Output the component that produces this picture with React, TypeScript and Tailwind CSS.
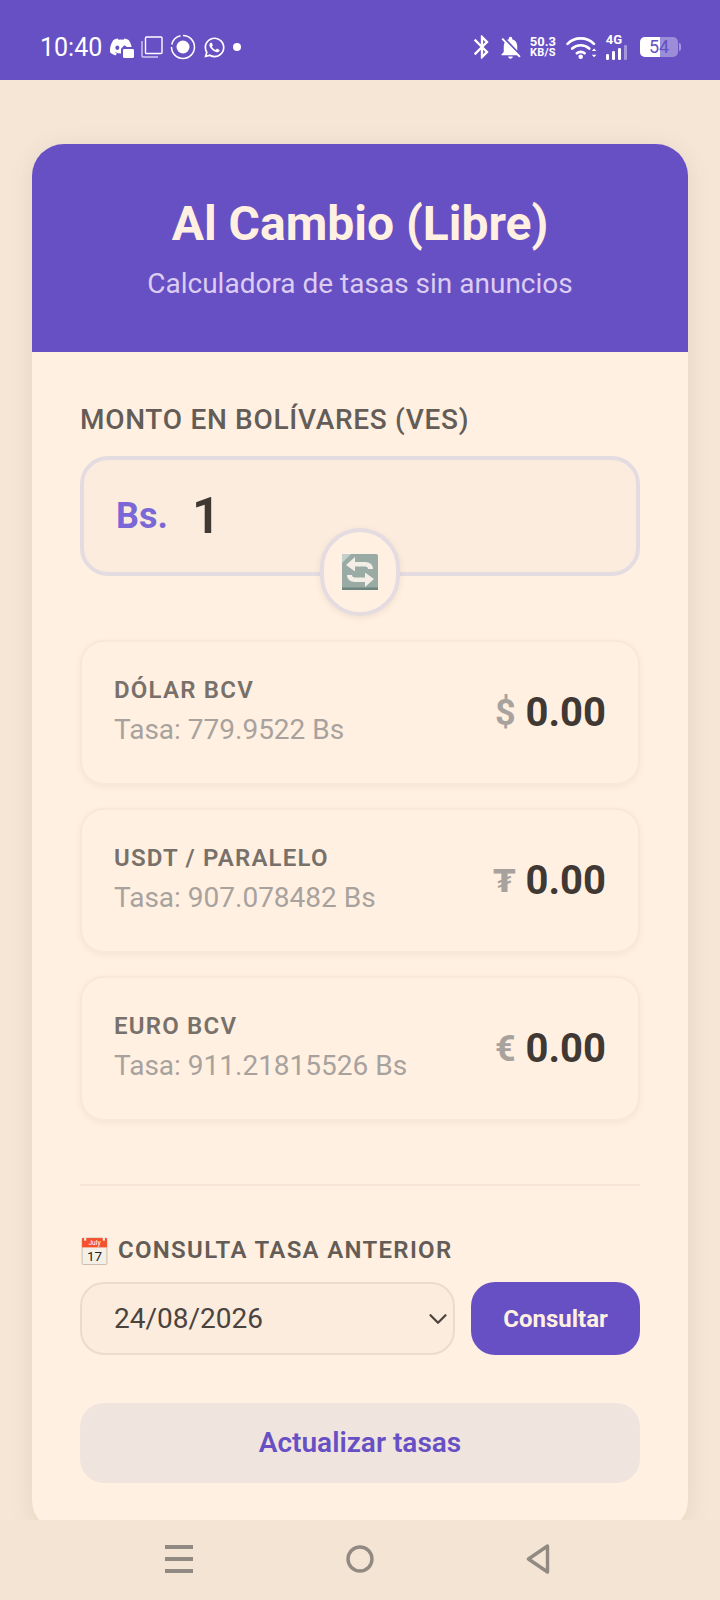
import React from 'react';
import { ChevronDown } from 'lucide-react';
import { FaDiscord, FaWhatsapp } from 'react-icons/fa';
import { MdBluetooth, MdNotificationsOff } from 'react-icons/md';

const rates = [
  { name: 'DÓLAR BCV', rate: 'Tasa: 779.9522 Bs', symbol: '$' },
  { name: 'USDT / PARALELO', rate: 'Tasa: 907.078482 Bs', symbol: '₮' },
  { name: 'EURO BCV', rate: 'Tasa: 911.21815526 Bs', symbol: '€' },
];

// Status bar icons
const WifiIcon = () => (
  <svg width="31" height="25" viewBox="0 0 30 24" fill="none" stroke="white" strokeWidth="2.6" strokeLinecap="round">
    <path d="M1.5 8.5C8.5 1.5 20 1.5 27 8.5" />
    <path d="M6 13C10.5 8.8 18 8.8 22.5 13" />
    <path d="M10.5 17.5C12.5 15.8 16 15.8 18 17.5" />
    <circle cx="14.2" cy="21" r="2.2" fill="white" stroke="none" />
    <path d="M25 15.5l2.2-2.5 2.2 2.500zM25 19l2.2 2.500 2.2-2.500z" fill="white" stroke="none" />
  </svg>
);

const SignalIcon = () => (
  <svg width="22" height="15" viewBox="0 0 22 15" fill="white">
    <rect x="0" y="9" width="3" height="6" rx="1.2" />
    <rect x="6" y="6" width="3" height="9" rx="1.2" />
    <rect x="12" y="3" width="3" height="12" rx="1.2" />
    <rect x="18" y="0" width="3" height="15" rx="1" opacity="0.4" />
  </svg>
);

const Battery = () => (
  <div className="flex items-center gap-[1px]">
    <div className="relative w-[38px] h-[20px] rounded-[5px] bg-white/35 overflow-hidden">
      <div className="h-full w-[20px] bg-white" />
      <span className="absolute inset-0 flex items-center justify-center text-[18px] leading-none text-[#6750c4]">54</span>
    </div>
    <div className="w-[2px] h-[8px] rounded-r bg-white/40" />
  </div>
);

const DiscordBubble = () => (
  <span className="relative w-[24px] h-[24px] flex items-center">
    <FaDiscord size={24} />
    <span className="absolute right-[-1px] bottom-[1px] w-[11px] h-[9px] rounded-[1px] bg-white outline outline-[2px] outline-[#6750c4]" />
  </span>
);

const SwapEmoji = () => (
  <svg width="36" height="36" viewBox="0 0 36 36">
    <rect x="0" y="0" width="36" height="36" rx="2" fill="#9aaaa5" />
    <rect x="0" y="33.500" width="36" height="2.500" fill="#6f8580" />
    <path d="M0 0h9L0 9z" fill="#c4d0cc" />
    <path d="M4 11l9-8v5h10c5 0 8 3 8 7h-5c0-1.500-1-2.500-3-2.500H13v5z" fill="#f3efe6" />
    <path d="M32 25l-9 8v-5H13c-5 0-8-3-8-7h5c0 1.500 1 2.500 3 2.500h10v-5z" fill="#f3efe6" />
  </svg>
);

const CalendarEmoji = () => (
  <svg width="27" height="29" viewBox="0 0 25 28">
    <rect x="0.500" y="2" width="24" height="25.500" rx="1.500" fill="#f4f0e8" stroke="#cdbfae" />
    <rect x="0.500" y="2" width="24" height="9" fill="#f4512c" />
    <rect x="2.500" y="0" width="2" height="4.500" fill="#f4f0e8" />
    <rect x="20.500" y="0" width="2" height="4.500" fill="#f4f0e8" />
    <text x="12.500" y="8.800" textAnchor="middle" fontSize="6.500" fill="#fff" fontFamily="Roboto, sans-serif">July</text>
    <text x="12.500" y="24" textAnchor="middle" fontSize="13" fill="#222" fontFamily="Roboto, sans-serif">17</text>
  </svg>
);

const RateCard = ({ name, rate, symbol }: { name: string; rate: string; symbol: string }) => (
  <div className="h-[145px] rounded-[24px] border-2 border-[#f7e8da] bg-[#fff0e1] shadow-[0_2px_6px_rgba(120,90,60,0.07)] pl-[32px] pr-[32px] flex items-center justify-between">
    <div className="pb-[2px]">
      <div className="text-[24px] leading-[32px] font-semibold tracking-[1.2px] text-[#78706a]">{name}</div>
      <div className="mt-[4px] text-[28px] leading-[40px] text-[#a8a29e]">{rate}</div>
    </div>
    <div className="flex items-center gap-[10px]">
      {/* the tenge sign comes from a fallback font in the app */}
      <span className={symbol === '₮' ? "text-[32px] font-bold leading-none text-[#a8a29e] font-['DejaVu_Sans',sans-serif]" : 'text-[36px] font-bold leading-none text-[#a8a29e]'}>{symbol}</span>
      <span className="text-[40px] font-bold leading-none text-[#3f3833]">0.00</span>
    </div>
  </div>
);

export default function App() {
  return (
    <div className="w-[720px] h-[1600px] flex flex-col bg-[#f5e6d6] overflow-hidden font-['Roboto',sans-serif]">
      {/* status bar */}
      <div className="h-[80px] shrink-0 bg-[#6750c4] text-white flex items-center justify-between pl-[40px] pr-[39px] pt-[14px]">
        <div className="flex items-center gap-[7px]">
          <span className="text-[25px] leading-none">10:40</span>
          <DiscordBubble />
          <svg className="ml-[1px]" width="22" height="22" viewBox="0 0 22 22" fill="none" stroke="white" strokeWidth="1.400">
            <rect x="4.500" y="1" width="16.500" height="16.500" rx="1" />
            <path d="M1 5v15a1 1 0 0 0 1 1h15" opacity="0.7" />
          </svg>
          <svg width="26" height="26" viewBox="0 0 26 26" fill="none" stroke="white" strokeWidth="1.500">
            <path d="M13 1.500A11.500 11.500 0 1 1 1.500 13" />
            <path d="M10.500 1.800A11.500 11.500 0 0 0 1.800 10.500" />
            <circle cx="13" cy="13" r="6.500" fill="white" stroke="none" />
          </svg>
          <FaWhatsapp size={23} />
          <span className="w-[8px] h-[8px] rounded-full bg-white" />
        </div>
        <div className="flex items-center">
          <MdBluetooth size={28} />
          <MdNotificationsOff size={27} className="ml-[1px]" />
          <div className="ml-[6px] flex flex-col items-center text-[11px] font-bold leading-[11px] tracking-[0.2px]">
            <span className="text-[13px] tracking-normal">50.3</span>
            <span>KB/S</span>
          </div>
          <div className="ml-[10px]">
            <WifiIcon />
          </div>
          <div className="ml-[9px] flex flex-col items-center">
            <span className="text-[13px] font-bold leading-[10px] -ml-[6px]">4G</span>
            <SignalIcon />
          </div>
          <div className="ml-[12px]">
            <Battery />
          </div>
        </div>
      </div>

      <div className="flex-1 min-h-0 overflow-hidden px-[32px] pt-[64px]">
        <div className="rounded-[32px] bg-[#fff0e1] overflow-hidden h-[1388px] shadow-[0_4px_24px_rgba(120,90,60,0.12)]">
          {/* header */}
          <div className="h-[208px] bg-[#6750c4] flex flex-col items-center pt-[48px]">
            <h1 className="text-[48px] leading-[64px] font-bold text-[#fff0e1]">Al Cambio (Libre)</h1>
            <p className="text-[28px] leading-[40px] mt-[8px] text-[#dccdf0]">Calculadora de tasas sin anuncios</p>
          </div>

          <div className="px-[48px] pt-[50px]">
            <label className="block text-[28px] leading-[36px] font-medium tracking-[0.7px] text-[#645c56]">MONTO EN BOLÍVARES (VES)</label>

            <div className="relative mt-[18px] h-[120px] rounded-[28px] border-[4px] border-[#e4dce0] bg-[#fbecdd] flex items-center pl-[32px]">
              <span className="text-[36px] font-bold text-[#7a68d6] mr-[24px]">Bs.</span>
              <span className="text-[50px] leading-none font-semibold text-[#3f3833]">1</span>
              <div className="absolute left-1/2 -translate-x-1/2 top-[68px] w-[80px] h-[88px] rounded-full border-[4px] border-[#e4dce0] bg-[#fff0e1] shadow-[0_2px_6px_rgba(120,90,60,0.1)] flex items-center justify-center">
                <SwapEmoji />
              </div>
            </div>

            <div className="mt-[64px] flex flex-col gap-[23px]">
              {rates.map((r) => (
                <RateCard key={r.name} {...r} />
              ))}
            </div>

            <div className="mt-[63px] h-[2px] bg-[#f7e6d7]" />

            <div className="mt-[48px] flex items-center gap-[10px] pl-[1px]">
              <CalendarEmoji />
              <span className="text-[24px] leading-[32px] font-semibold tracking-[1.3px] text-[#645c56]">CONSULTA TASA ANTERIOR</span>
            </div>

            <div className="mt-[16px] flex gap-[16px]">
              <div className="relative w-[375px] h-[73px] rounded-[24px] border-2 border-[#eadbcd] bg-[#fbecdd] flex items-center pl-[32px] text-[28px] text-[#4a433e]">
                24/08/2026
                <ChevronDown size={30} className="absolute right-0 top-[20px] text-[#4a433e]" strokeWidth={1.800} />
              </div>
              <button className="flex-1 h-[73px] rounded-[24px] bg-[#6750c4] text-[24px] font-bold text-[#fff0e1]">Consultar</button>
            </div>

            <button className="mt-[48px] w-full h-[80px] rounded-[24px] bg-[#f0e4df] text-[28px] font-semibold text-[#6750c4]">Actualizar tasas</button>
          </div>
        </div>
      </div>

      {/* nav bar */}
      <div className="h-[80px] shrink-0 relative bg-[#f4e4d4] flex items-center justify-center gap-[151px] pb-[2px] pr-[5px]">
        <svg className="mr-[2px]" width="28" height="28" viewBox="0 0 28 28" fill="#918a83">
          <rect width="28" height="4" y="0" />
          <rect width="28" height="4" y="12" />
          <rect width="28" height="4" y="24" />
        </svg>
        <svg width="28" height="28" viewBox="0 0 28 28" fill="none" stroke="#918a83" strokeWidth="3.400">
          <circle cx="14" cy="14" r="12" />
        </svg>
        <svg className="ml-[1px]" width="24" height="30" viewBox="0 0 24 30" fill="none" stroke="#918a83" strokeWidth="3.400" strokeLinejoin="round">
          <path d="M21.500 2L2.500 15l19 13z" />
        </svg>
      </div>
    </div>
  );
}
